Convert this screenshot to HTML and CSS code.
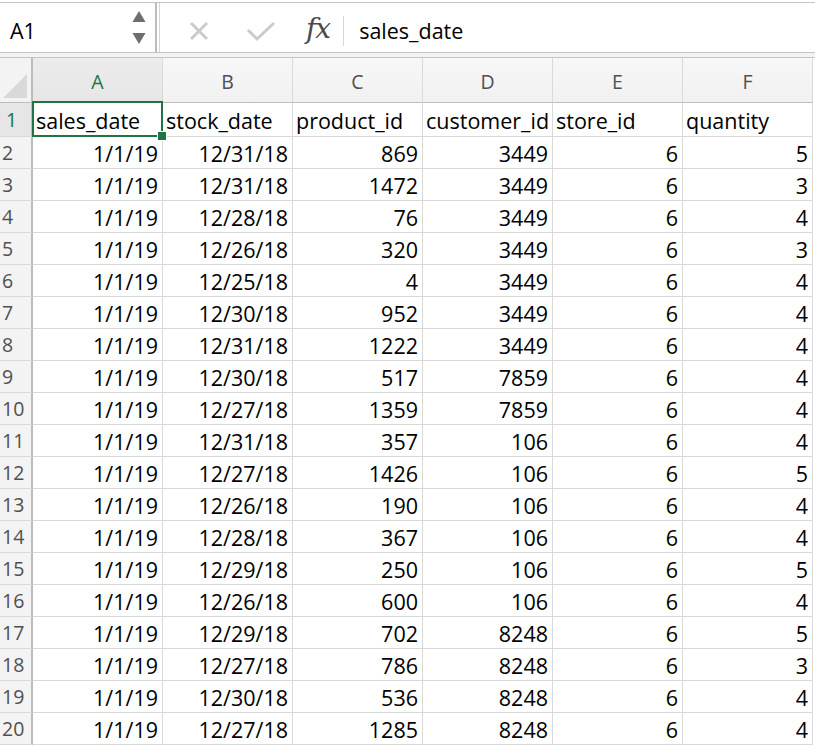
FILE: index.html
```html
<!DOCTYPE html>
<html>
<head>
<meta charset="utf-8">
<link rel="stylesheet" href="styles.css">
</head>
<body>
<div class="formula-bar">
  <div class="name-box">
    <span class="name-text">A1</span>
    <div class="spinner">
      <svg width="14" height="36" viewBox="0 0 14 36"><path d="M7 1 L13.5 12 L0.5 12 Z" fill="#6e6e6e"/><path d="M0.5 23 L13.5 23 L7 34 Z" fill="#6e6e6e"/></svg>
    </div>
  </div>
  <div class="fx-area">
    <svg class="icon-x" width="20" height="20" viewBox="0 0 20 20"><path d="M2 2 L18 18 M18 2 L2 18" stroke="#cbcbcb" stroke-width="3" stroke-linecap="butt"/></svg>
    <svg class="icon-check" width="30" height="22" viewBox="0 0 30 22"><path d="M2 10 L11 19 L28 3" stroke="#cbcbcb" stroke-width="3" fill="none"/></svg>
    <span class="fx">fx</span>
    <span class="sep"></span>
    <span class="formula-text">sales_date</span>
  </div>
</div>
<div class="bar-gap"></div>
<div class="sheet" id="sheet"></div>
<script src="app.js"></script>
</body>
</html>
```
FILE: app.js
```js
const rows = [
["sales_date","stock_date","product_id","customer_id","store_id","quantity"],
["1/1/19","12/31/18","869","3449","6","5"],
["1/1/19","12/31/18","1472","3449","6","3"],
["1/1/19","12/28/18","76","3449","6","4"],
["1/1/19","12/26/18","320","3449","6","3"],
["1/1/19","12/25/18","4","3449","6","4"],
["1/1/19","12/30/18","952","3449","6","4"],
["1/1/19","12/31/18","1222","3449","6","4"],
["1/1/19","12/30/18","517","7859","6","4"],
["1/1/19","12/27/18","1359","7859","6","4"],
["1/1/19","12/31/18","357","106","6","4"],
["1/1/19","12/27/18","1426","106","6","5"],
["1/1/19","12/26/18","190","106","6","4"],
["1/1/19","12/28/18","367","106","6","4"],
["1/1/19","12/29/18","250","106","6","5"],
["1/1/19","12/26/18","600","106","6","4"],
["1/1/19","12/29/18","702","8248","6","5"],
["1/1/19","12/27/18","786","8248","6","3"],
["1/1/19","12/30/18","536","8248","6","4"],
["1/1/19","12/27/18","1285","8248","6","4"]
];
const sheet = document.getElementById('sheet');
let html = '<div class="corner"><span class="tri"></span></div>';
"ABCDEF".split('').forEach((c,i)=>{
  html += `<div class="colhead${i===0?' sel':''}">${c}</div>`;
});
rows.forEach((r,ri)=>{
  html += `<div class="rowhead${ri===0?' sel':''}">${ri+1}</div>`;
  r.forEach((v,ci)=>{
    const cls = ri===0 ? 'cell text' : 'cell num';
    let inner = v;
    if (ri===0 && ci===0) inner = v + '<span class="selbox"><span class="handle"></span></span>';
    html += `<div class="${cls}${ri===0&&ci===0?' active':''}">${inner}</div>`;
  });
});
sheet.innerHTML = html;
```
FILE: styles.css
```css
html, body { margin: 0; padding: 0; background: #fff; }
body { font-family: "Open Sans", "Liberation Sans", sans-serif; color: #000; overflow: hidden; }

.formula-bar {
  margin-top: 2px;
  height: 49px;
  border-top: 1px solid #c4c4c4;
  border-bottom: 1px solid #c4c4c4;
  display: flex;
  background: #fff;
}
.name-box {
  width: 157px;
  border-right: 2px solid #bdbdbd;
  display: flex;
  align-items: center;
  justify-content: space-between;
  padding: 6px 10px 0 10px;
  box-sizing: border-box;
}
.name-text { font-size: 21.5px; }
.spinner { display: flex; align-items: center; margin-right: -1px; margin-top: -6px; }
.fx-area {
  flex: 1;
  margin-left: 2px;
  padding-top: 6px;
  border-left: 1px solid #d6d6d6;
  display: flex;
  align-items: center;
  padding-left: 29px;
}
.icon-x { margin-right: 37px; }
.icon-check { margin-right: 30px; }
.fx {
  font-family: "DejaVu Serif", "Liberation Serif", serif;
  font-style: italic;
  font-size: 28px;
  color: #4a4a4a;
  letter-spacing: -1px;
  margin-right: 13px;
  margin-top: -5px;
}
.sep { width: 1px; height: 30px; background: #d8d8d8; margin-right: 15px; }
.formula-text { font-size: 21.5px; }

.bar-gap { height: 4px; background: #f3f3f3; border-bottom: 1px solid #c4c4c4; }

.sheet {
  display: grid;
  grid-template-columns: 33px repeat(6, 130px);
  grid-template-rows: 45px 34px repeat(19, 32px);
}
.corner {
  background: #f3f3f3;
  border-right: 2px solid #bcbcbc;
  border-bottom: 1px solid #bcbcbc;
  position: relative;
  box-sizing: border-box;
}
.tri {
  position: absolute;
  right: 4px; bottom: 4px;
  width: 0; height: 0;
  border-left: 24px solid transparent;
  border-bottom: 24px solid #d9d9d9;
}
.colhead {
  background: linear-gradient(#f7f7f7, #f1f1f1);
  border-right: 1px solid #d9d9d9;
  border-bottom: 1px solid #bcbcbc;
  box-sizing: border-box;
  display: flex;
  align-items: center;
  justify-content: center;
  padding-top: 2px;
  font-size: 19.5px;
  color: #505050;
}
.colhead.sel { background: linear-gradient(#ececec, #e6e6e6); color: #217346; }
.rowhead {
  background: #f3f3f3;
  border-right: 2px solid #bcbcbc;
  border-bottom: 1px solid #d9d9d9;
  box-sizing: border-box;
  display: flex;
  align-items: center;
  padding-left: 2px;
  font-size: 19.5px;
  color: #505050;
}
.rowhead.sel { background: #e6e6e6; color: #217346; padding-left: 6px; }
.cell {
  border-right: 1px solid #d9d9d9;
  border-bottom: 1px solid #d9d9d9;
  box-sizing: border-box;
  display: flex;
  align-items: center;
  font-size: 21.5px;
  padding: 0 4px;
  white-space: nowrap;
  overflow: visible;
}
.cell.text { justify-content: flex-start; padding-top: 2px; padding-left: 3px; }
.cell.num { justify-content: flex-end; padding-top: 1px; }
.cell.active { position: relative; }
.selbox {
  position: absolute;
  left: -1px; top: -2px; right: -1px; bottom: -1px;
  border: 2px solid #217346;
}
.handle {
  position: absolute;
  right: -6px; bottom: -6px;
  width: 8px; height: 8px;
  background: #217346;
  border: 1px solid #fff;
}
```
